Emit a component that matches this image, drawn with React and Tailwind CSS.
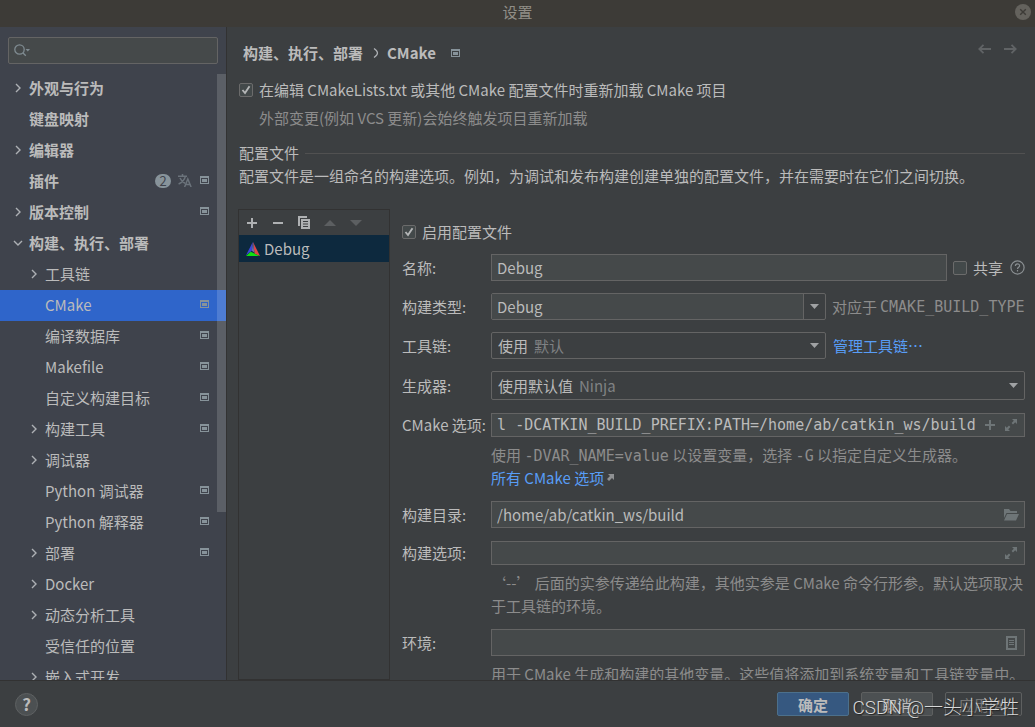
import React, { useState, useEffect, useRef } from 'react';

const treeItems = [
  { label: '外观与行为', level: 0, arrow: 'right' },
  { label: '键盘映射', level: 0 },
  { label: '编辑器', level: 0, arrow: 'right' },
  { label: '插件', level: 0, badge: 2, translate: true, project: true },
  { label: '版本控制', level: 0, arrow: 'right', project: true },
  { label: '构建、执行、部署', level: 0, arrow: 'down' },
  { label: '工具链', level: 1, arrow: 'right' },
  { label: 'CMake', level: 1, project: true },
  { label: '编译数据库', level: 1, project: true },
  { label: 'Makefile', level: 1, project: true },
  { label: '自定义构建目标', level: 1, project: true },
  { label: '构建工具', level: 1, arrow: 'right', project: true },
  { label: '调试器', level: 1, arrow: 'right' },
  { label: 'Python 调试器', level: 1, project: true },
  { label: 'Python 解释器', level: 1, project: true },
  { label: '部署', level: 1, arrow: 'right', project: true },
  { label: 'Docker', level: 1, arrow: 'right' },
  { label: '动态分析工具', level: 1, arrow: 'right' },
  { label: '受信任的位置', level: 1 },
  { label: '嵌入式开发', level: 1, arrow: 'right' },
];

const mono = "font-['DejaVu_Sans_Mono','Noto_Sans_CJK_SC',monospace]";
const fieldBox = 'flex items-center min-w-0 flex-1 border border-[#646464] bg-[#45494a]';
const fieldInput = 'min-w-0 flex-1 h-full bg-transparent pl-[5px] outline-none';

function Chevron({ dir }) {
  return (
    <svg width="10" height="10" viewBox="0 0 10 10" fill="none" stroke="#adb0b4" strokeWidth="1.4">
      {dir === 'down' ? <path d="M1 3l4 4 4-4" /> : <path d="M3 1l4 4-4 4" />}
    </svg>
  );
}

function ProjectIcon() {
  return (
    <svg width="9" height="8" viewBox="0 0 9 8" shapeRendering="crispEdges" className="shrink-0">
      <path d="M0 0h9v8H0zM1 2v5h7V2z" fill="#87939a" fillRule="evenodd" />
      <path d="M2 3h5v3H2z" fill="#87939a" />
    </svg>
  );
}

function TranslateIcon() {
  return (
    <svg width="14" height="13" viewBox="0 0 14 13" fill="none" stroke="#6b737b" strokeWidth="1.5">
      <path d="M0 2.2h9M4.5 0v2M7.4 2.4C6.5 6 4 8.5 .6 10M2 4c1 2.5 3 4.3 5 5.2" />
      <path d="M6.6 13l3.2-8 3.3 8M7.8 10.4h4.2" />
    </svg>
  );
}

function ExpandIcon() {
  return (
    <svg width="12" height="12" viewBox="0 0 12 12" className="block">
      <path d="M7 0h5v5l-1.8-1.8L8 5.4 6.6 4 8.8 1.8zM0 7l1.8 1.8L4 6.6 5.4 8 3.2 10.2 5 12H0z" fill="#6e7577" />
    </svg>
  );
}

function DownTriangle() {
  return (
    <svg width="9" height="5" viewBox="0 0 9 5" className="block">
      <path d="M0 0h9L4.5 5z" fill="#a0a2a4" />
    </svg>
  );
}

function CMakeLogo() {
  return (
    <svg width="14" height="14" viewBox="0 0 14 14">
      <path d="M6.8 0L0 13.3l5.8-4.6z" fill="#3c46d8" />
      <path d="M7 0l7 14-5.4-2.3z" fill="#e04545" />
      <path d="M7 0l-1.2 8.7 2.6 2z" fill="#6b6fa8" />
      <path d="M0 14l4.7-4.2L13.5 14z" fill="#10e010" />
    </svg>
  );
}

function Checkbox({ id, checked, onChange }) {
  return (
    <span className="relative block size-[14px] shrink-0">
      <input
        id={id}
        type="checkbox"
        checked={checked}
        onChange={onChange}
        className="block size-[14px] appearance-none rounded-xs border border-[#6b6b6b] bg-[#43494a]"
      />
      {checked && (
        <svg width="14" height="14" viewBox="0 0 14 14" fill="none" className="pointer-events-none absolute inset-0">
          <path d="M3.5 7l2.5 3 4.5-6.8" stroke="#b4b6b7" strokeWidth="1.9" />
        </svg>
      )}
    </span>
  );
}

function TreeItem({ item, selected, onSelect }) {
  return (
    <button
      type="button"
      onClick={onSelect}
      className={`flex h-[31px] w-full shrink-0 items-center pr-4 pb-[2px] text-left ${
        item.level === 0 ? 'pl-[13px] font-bold' : 'pl-[29px]'
      } ${selected ? 'bg-[#2f65ca]' : ''}`}
    >
      <span className="w-4 shrink-0">{item.arrow && <Chevron dir={item.arrow} />}</span>
      <span className="flex-1 whitespace-nowrap">{item.label}</span>
      <span className="flex items-center gap-[7px]">
        {item.badge && (
          <span className="flex h-[14px] w-4 items-center justify-center rounded-full bg-[#87939a] text-[13px] font-normal leading-none text-[#3f434c]">
            {item.badge}
          </span>
        )}
        {item.translate && <TranslateIcon />}
        {item.project && (
          <span className="pr-[1px] pb-[2px] pl-[1px]">
            <ProjectIcon />
          </span>
        )}
      </span>
    </button>
  );
}

function Sidebar() {
  const [selected, setSelected] = useState('CMake');

  return (
    <aside className="relative flex w-[227px] shrink-0 flex-col overflow-hidden border-r border-[#323232] bg-[#3f434c]">
      <div className="mx-2 mt-[10px] mb-[9px] flex h-[27px] shrink-0 items-center rounded-xs border border-[#646464] bg-[#45494a] pl-[5px]">
        <svg width="18" height="13" viewBox="0 0 18 13" fill="none" stroke="#7f8b91" strokeWidth="1.3">
          <circle cx="5.5" cy="5.5" r="4.7" />
          <path d="M8.8 8.8l3 3" />
          <path d="M11.5 5H16l-2.2 2.5z" fill="#7f8b91" stroke="none" />
        </svg>
        <input type="text" aria-label="搜索" className="h-full min-w-0 flex-1 bg-transparent outline-none" />
      </div>
      <nav className="flex min-h-0 flex-1 flex-col overflow-hidden">
        {treeItems.map((item) => (
          <TreeItem
            key={item.label}
            item={item}
            selected={item.label === selected}
            onSelect={() => setSelected(item.label)}
          />
        ))}
      </nav>
      {/* Scrollbar thumb */}
      <div className="absolute top-[47px] right-0 h-[438px] w-[9px] bg-white/15"></div>
    </aside>
  );
}

function FormRow({ label, id, className, children }) {
  return (
    <div className={`flex items-stretch ${className}`}>
      <label htmlFor={id} className="flex w-[89px] shrink-0 items-center whitespace-nowrap">
        {label}
      </label>
      {children}
    </div>
  );
}

function HintSelect({ id, value, hint, hintClass }) {
  return (
    <div className="relative flex min-w-0 flex-1 items-center rounded-xs border border-[#646464] pr-[6px]">
      <select
        id={id}
        defaultValue={value}
        className="absolute inset-0 h-full w-full appearance-none bg-transparent pl-[6px] outline-none"
      >
        <option value={value}>{value}</option>
      </select>
      <span className={`pointer-events-none flex-1 text-[#808284] ${hintClass}`}>{hint}</span>
      <span className="pointer-events-none">
        <DownTriangle />
      </span>
    </div>
  );
}

function ProfileList() {
  return (
    <div className="flex w-[152px] shrink-0 flex-col border border-[#323232]">
      <div className="flex h-[25px] shrink-0 items-center gap-[14px] pl-[7px]">
        <button type="button" aria-label="添加">
          <svg width="12" height="12" viewBox="0 0 12 12" className="block">
            <path d="M5 1h2v4h4v2H7v4H5V7H1V5h4z" fill="#afb1b3" />
          </svg>
        </button>
        <button type="button" aria-label="移除">
          <svg width="12" height="12" viewBox="0 0 12 12" className="block">
            <path d="M1 5h10v2H1z" fill="#afb1b3" />
          </svg>
        </button>
        <button type="button" aria-label="复制">
          <svg width="12" height="13" viewBox="0 0 12 13" className="block">
            <path d="M0 0h9v2H2v8H0z" fill="#afb1b3" />
            <path d="M3 3h9v10H3zM5 5v1h5V5zM5 7.5v1h5v-1zM5 10v1h5v-1z" fill="#afb1b3" fillRule="evenodd" />
          </svg>
        </button>
        <button type="button" aria-label="上移" disabled>
          <svg width="12" height="6" viewBox="0 0 12 6" className="block">
            <path d="M0 6l6-6 6 6z" fill="#5c5f61" />
          </svg>
        </button>
        <button type="button" aria-label="下移" disabled>
          <svg width="12" height="6" viewBox="0 0 12 6" className="block">
            <path d="M0 0h12L6 6z" fill="#5c5f61" />
          </svg>
        </button>
      </div>
      <button type="button" className="flex h-[27px] shrink-0 items-center gap-1 bg-[#0d293e] pl-[7px] text-left">
        <CMakeLogo />
        Debug
      </button>
    </div>
  );
}

function ProfileForm() {
  const [enabled, setEnabled] = useState(true);
  const [shared, setShared] = useState(false);
  const optionsRef = useRef(null);

  // Keep the end of the long options string visible
  useEffect(() => {
    if (optionsRef.current) {
      optionsRef.current.scrollLeft = optionsRef.current.scrollWidth;
    }
  }, []);

  return (
    <div className="flex min-w-0 flex-1 flex-col pt-3 pl-3">
      <div className="flex h-[22px] shrink-0 items-center gap-[6px]">
        <Checkbox id="enabled" checked={enabled} onChange={() => setEnabled(!enabled)} />
        <label htmlFor="enabled">启用配置文件</label>
      </div>

      <FormRow label="名称:" id="name" className="mt-[11px] h-[27px] shrink-0">
        <div className={fieldBox}>
          <input id="name" type="text" defaultValue="Debug" className={fieldInput} />
        </div>
        <div className="flex items-center pl-[6px]">
          <Checkbox id="shared" checked={shared} onChange={() => setShared(!shared)} />
          <label htmlFor="shared" className="pl-[6px] pr-[7px]">共享</label>
          <svg width="15" height="15" viewBox="0 0 15 15" fill="none" stroke="#8a8f92" strokeWidth="1.2">
            <circle cx="7.5" cy="7.5" r="6.6" />
            <path d="M5.4 6c0-2.8 4.2-2.6 4.2-.3 0 1.5-2.1 1.5-2.1 3.2M7.5 10v1.5" />
          </svg>
        </div>
      </FormRow>

      <FormRow label="构建类型:" id="build-type" className="mt-3 h-[27px] shrink-0">
        <div className="flex min-w-0 flex-1 rounded-xs border border-[#646464]">
          <input
            id="build-type"
            type="text"
            defaultValue="Debug"
            className="min-w-0 flex-1 bg-[#45494a] pl-[5px] outline-none"
          />
          <button
            type="button"
            aria-label="选择构建类型"
            className="flex w-[22px] items-center justify-center border-l border-[#646464]"
          >
            <DownTriangle />
          </button>
        </div>
        <span className="flex w-[199px] shrink-0 items-center gap-[3px] pl-[6px] whitespace-nowrap text-[#8c8c8c]">
          对应于 <span className={mono}>CMAKE_BUILD_TYPE</span>
        </span>
      </FormRow>

      <FormRow label="工具链:" id="toolchain" className="mt-3 h-[27px] shrink-0">
        <HintSelect id="toolchain" value="使用" hint="默认" hintClass="pl-[42px]" />
        <span className="flex w-[199px] shrink-0 items-center pl-[7px]">
          <a href="#toolchains" className="text-[#589df6]">管理工具链⋯</a>
        </span>
      </FormRow>

      <FormRow label="生成器:" id="generator" className="mt-3 h-[29px] shrink-0">
        <HintSelect id="generator" value="使用默认值" hint="Ninja" hintClass="pl-[87px]" />
      </FormRow>

      <FormRow label="CMake 选项:" id="options" className="mt-[13px] h-6 shrink-0">
        <div className={`${fieldBox} pr-[7px] pl-[5px]`}>
          <input
            id="options"
            ref={optionsRef}
            type="text"
            defaultValue="devel -DCATKIN_BUILD_PREFIX:PATH=/home/ab/catkin_ws/build"
            className={`h-full min-w-0 flex-1 bg-transparent outline-none ${mono}`}
          />
          <button type="button" aria-label="添加选项" className="mr-[10px] ml-[9px]">
            <svg width="10" height="10" viewBox="0 0 10 10" className="block">
              <path d="M4 0h2v4h4v2H6v4H4V6H0V4h4z" fill="#6e7577" />
            </svg>
          </button>
          <button type="button" aria-label="展开选项">
            <ExpandIcon />
          </button>
        </div>
      </FormRow>
      <div className="mt-[6px] flex shrink-0 flex-col pl-[89px] leading-[23px] text-[#8c8c8c]">
        <p className="h-[23px] whitespace-nowrap">
          使用 <span className={mono}>-DVAR_NAME=value</span> 以设置变量，选择 <span className={mono}>-G</span>{' '}
          以指定自定义生成器。
        </p>
        <a href="#cmake-options" className="flex items-center gap-[3px] text-[#589df6]">
          所有 CMake 选项
          <svg width="7" height="7" viewBox="0 0 7 7">
            <path d="M1 0h6v6L5 4 2 7 0 5l3-3z" fill="#8f9193" />
          </svg>
        </a>
      </div>

      <FormRow label="构建目录:" id="build-dir" className="mt-3 h-[27px] shrink-0">
        <div className={`${fieldBox} pr-[5px]`}>
          <input id="build-dir" type="text" defaultValue="/home/ab/catkin_ws/build" className={fieldInput} />
          <button type="button" aria-label="浏览">
            <svg width="16" height="12" viewBox="0 0 16 12" className="block">
              <path d="M1 0h5l1.5 2H14v2H3.5L1 9z" fill="#6e7577" />
              <path d="M4 5h12l-3 6.5H1z" fill="#6e7577" />
            </svg>
          </button>
        </div>
      </FormRow>

      <FormRow label="构建选项:" id="build-options" className="mt-[13px] h-6 shrink-0">
        <div className={`${fieldBox} pr-[7px]`}>
          <input id="build-options" type="text" className={fieldInput} />
          <button type="button" aria-label="展开构建选项">
            <ExpandIcon />
          </button>
        </div>
      </FormRow>
      <p className="mt-[6px] shrink-0 pl-[89px] leading-[23px] text-[#8c8c8c]">
        ‘--’ 后面的实参传递给此构建，其他实参是 CMake 命令行形参。默认选项取决于工具链的环境。
      </p>

      <FormRow label="环境:" id="env" className="mt-3 h-[27px] shrink-0">
        <div className={`${fieldBox} pr-[7px]`}>
          <input id="env" type="text" className={fieldInput} />
          <button type="button" aria-label="编辑环境变量">
            <svg width="11" height="14" viewBox="0 0 11 14" className="block" shapeRendering="crispEdges">
              <path d="M0 0h11v14H0zM2 2v10h7V2z" fill="#6e7577" fillRule="evenodd" />
              <path d="M3 4h5v1H3zM3 6h5v1H3zM3 8h5v1H3z" fill="#6e7577" />
            </svg>
          </button>
        </div>
      </FormRow>
      <p className="mt-[6px] shrink-0 pl-[89px] leading-[23px] whitespace-nowrap text-[#8c8c8c]">
        用于 CMake 生成和构建的其他变量。这些值将添加到系统变量和工具链变量中。
      </p>
    </div>
  );
}

function App() {
  const [reload, setReload] = useState(true);

  return (
    <div className="flex h-screen flex-col overflow-hidden bg-[#3c3f41] font-['Noto_Sans_CJK_SC',sans-serif] text-[15px] leading-[22px] text-[#bbbbbb]">
      {/* Title bar */}
      <header className="relative flex h-[27px] shrink-0 items-center justify-center bg-[#3d3b37] pb-[3px] text-[#918e87]">
        设置
        <button type="button" aria-label="关闭" className="absolute top-1 right-1">
          <svg width="16" height="16" viewBox="0 0 16 16" className="block">
            <circle cx="8" cy="8" r="8" fill="#64625d" />
            <path d="M5.2 5.2l5.6 5.6M10.8 5.2l-5.6 5.6" stroke="#3d3b37" strokeWidth="1.4" />
          </svg>
        </button>
      </header>

      <div className="flex min-h-0 flex-1">
        <Sidebar />

        <main className="flex min-w-0 flex-1 flex-col overflow-hidden pr-[10px] pl-[11px]">
          <div className="mt-[15px] flex h-[22px] shrink-0 items-center pl-[5px]">
            <h1 className="flex items-center font-bold">
              构建、执行、部署
              <svg width="6" height="10" viewBox="0 0 6 10" fill="none" stroke="#adb0b4" className="mr-[8px] ml-[10px]">
                <path d="M1 .5Q4.5 3 4.5 5T1 9.5" strokeWidth="1.2" />
              </svg>
              CMake
            </h1>
            <span className="ml-[15px] flex-1">
              <ProjectIcon />
            </span>
            <div className="flex gap-[13px] pr-2 pb-2">
              <button type="button" aria-label="后退">
                <svg width="13" height="10" viewBox="0 0 13 10" fill="none" stroke="#606365" strokeWidth="1.8" className="block">
                  <path d="M13 5H1.5M5.5 .8L1.3 5l4.2 4.2" />
                </svg>
              </button>
              <button type="button" aria-label="前进">
                <svg width="13" height="10" viewBox="0 0 13 10" fill="none" stroke="#606365" strokeWidth="1.8" className="block">
                  <path d="M0 5h11.5M7.5 .8L11.7 5 7.5 9.2" />
                </svg>
              </button>
            </div>
          </div>

          <div className="mt-[15px] flex h-[22px] shrink-0 items-center gap-[6px] pl-[1px]">
            <Checkbox id="reload" checked={reload} onChange={() => setReload(!reload)} />
            <label htmlFor="reload">在编辑 CMakeLists.txt 或其他 CMake 配置文件时重新加载 CMake 项目</label>
          </div>
          <p className="mt-[6px] pl-[21px] text-[#8c8c8c]">外部变更(例如 VCS 更新)会始终触发项目重新加载</p>

          <div className="mt-[13px] flex shrink-0 items-center gap-[6px] pl-[1px]">
            <h2>配置文件</h2>
            <hr className="flex-1 border-[#515151]" />
          </div>
          <p className="mt-[1px] shrink-0 pl-[1px]">
            配置文件是一组命名的构建选项。例如，为调试和发布构建创建单独的配置文件，并在需要时在它们之间切换。
          </p>

          <div className="mt-[22px] flex min-h-0 flex-1">
            <ProfileList />
            <ProfileForm />
          </div>
        </main>
      </div>

      <footer className="relative flex h-[47px] shrink-0 items-center gap-3 border-t border-[#323232] pr-[13px] pl-[15px]">
        <button
          type="button"
          aria-label="帮助"
          className="flex size-[23px] items-center justify-center rounded-full border border-[#5e6162] bg-[#4c5052] text-[17px] font-bold"
        >
          ?
        </button>
        <div className="flex-1"></div>
        <button type="button" className="h-6 w-[72px] rounded-xs border border-[#4c708c] bg-[#365880] leading-none font-bold">
          确定
        </button>
        <button type="button" className="h-6 w-[72px] rounded-xs border border-[#5e6060] bg-[#4c5052] leading-none">
          取消
        </button>
        <button type="button" disabled className="h-6 w-[77px] rounded-xs border border-[#5e6060] leading-none text-[#777777]">
          应用(A)
        </button>
        <span className="pointer-events-none absolute right-4 bottom-[5px] font-['Roboto','Noto_Sans_CJK_SC',sans-serif] text-[19px] leading-7 font-light whitespace-nowrap text-[#d8d9d9] [text-shadow:1px_1px_1px_#222]">
          CSDN @一头小学牲
        </span>
      </footer>
    </div>
  );
}

export default App;
